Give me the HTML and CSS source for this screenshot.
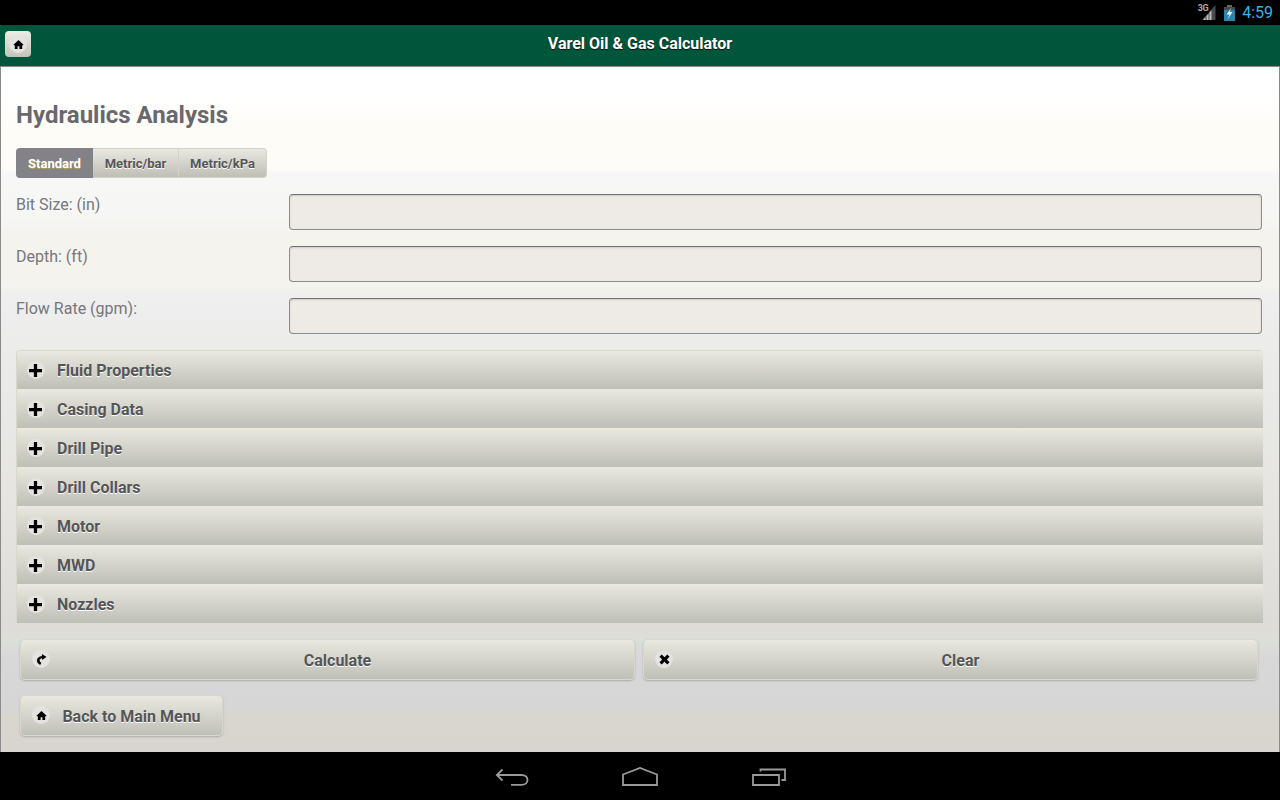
FILE: index.html
```html
<!DOCTYPE html>
<html lang="en">
<head>
<meta charset="utf-8">
<title>Varel Oil &amp; Gas Calculator</title>
<link rel="stylesheet" href="styles.css">
</head>
<body>
<div class="status">
  <span class="net">3G</span>
  <svg class="signal" width="14" height="15" viewBox="0 0 14 15"><path d="M0 15 13.500 0V15Z" fill="#4a4a4a"/><path d="M1 15 3.500 12V15ZM4.500 15V11L6.500 8.700V15ZM7.500 15V7.500L9.500 5.300V15Z" fill="#bdbdbd"/></svg>
  <svg class="battery" width="11" height="16" viewBox="0 0 11 16"><path d="M3 0H8V2H3Z" fill="#666"/><path d="M0 2H11V5H0Z" fill="#4a4a4a"/><path d="M0 5H11V16H0Z" fill="#2c84ae"/><path d="M7.500 2.500 2.500 9.500H5.500L3.500 14.500 8.500 7H5.500Z" fill="#e8f4f8"/></svg>
  <span class="clock">4:59</span>
</div>
<header class="appbar">
  <a class="homebtn"><span class="disc"><svg class="ic" viewBox="0 0 12 12"><path d="M6 1 .5 6.300 1.300 7 2 6.500V11H5V8H7V11H10V6.500L10.700 7 11.500 6.300Z"/></svg></span></a>
  <h1 class="apptitle">Varel Oil &amp; Gas Calculator</h1>
</header>
<main class="page">
  <h2 class="heading">Hydraulics Analysis</h2>
  <div class="segments">
    <span class="seg seg-on">Standard</span><span class="seg seg-a">Metric/bar</span><span class="seg seg-b">Metric/kPa</span>
  </div>
  <div class="field"><label class="lbl">Bit Size: (in)</label><div class="inp"></div></div>
  <div class="field"><label class="lbl">Depth: (ft)</label><div class="inp"></div></div>
  <div class="field"><label class="lbl">Flow Rate (gpm):</label><div class="inp"></div></div>
  <div class="accordion">
    <div class="row"><span class="disc"><svg class="ic ic-plus" viewBox="0 0 12 12"><path d="M4.500 0H7.500V4.500H12V7.500H7.500V12H4.500V7.500H0V4.500H4.500Z"/></svg></span><span class="rowtext">Fluid Properties</span></div>
    <div class="row"><span class="disc"><svg class="ic ic-plus" viewBox="0 0 12 12"><path d="M4.500 0H7.500V4.500H12V7.500H7.500V12H4.500V7.500H0V4.500H4.500Z"/></svg></span><span class="rowtext">Casing Data</span></div>
    <div class="row"><span class="disc"><svg class="ic ic-plus" viewBox="0 0 12 12"><path d="M4.500 0H7.500V4.500H12V7.500H7.500V12H4.500V7.500H0V4.500H4.500Z"/></svg></span><span class="rowtext">Drill Pipe</span></div>
    <div class="row"><span class="disc"><svg class="ic ic-plus" viewBox="0 0 12 12"><path d="M4.500 0H7.500V4.500H12V7.500H7.500V12H4.500V7.500H0V4.500H4.500Z"/></svg></span><span class="rowtext">Drill Collars</span></div>
    <div class="row"><span class="disc"><svg class="ic ic-plus" viewBox="0 0 12 12"><path d="M4.500 0H7.500V4.500H12V7.500H7.500V12H4.500V7.500H0V4.500H4.500Z"/></svg></span><span class="rowtext">Motor</span></div>
    <div class="row"><span class="disc"><svg class="ic ic-plus" viewBox="0 0 12 12"><path d="M4.500 0H7.500V4.500H12V7.500H7.500V12H4.500V7.500H0V4.500H4.500Z"/></svg></span><span class="rowtext">MWD</span></div>
    <div class="row"><span class="disc"><svg class="ic ic-plus" viewBox="0 0 12 12"><path d="M4.500 0H7.500V4.500H12V7.500H7.500V12H4.500V7.500H0V4.500H4.500Z"/></svg></span><span class="rowtext">Nozzles</span></div>
  </div>
  <div class="actions">
    <a class="btn"><span class="disc btn-disc"><svg class="ic" viewBox="0 0 12 12"><path d="M6.500 0 11.500 3.200 6.500 6.500V4.600C5 4.900 4 5.800 4 7.200 4 8.200 4.700 9 5.800 9.500L4.600 12C2.200 11 1 9.300 1 7.200 1 4.400 3.300 2.500 6.500 2.200Z"/></svg></span><span class="btntext">Calculate</span></a>
    <a class="btn"><span class="disc btn-disc"><svg class="ic" viewBox="0 0 12 12"><path d="M3 .5 6 3.500 9 .5 11.500 3 8.500 6 11.500 9 9 11.500 6 8.500 3 11.500 .5 9 3.500 6 .5 3Z"/></svg></span><span class="btntext">Clear</span></a>
  </div>
  <a class="btn btn-back"><span class="disc btn-disc"><svg class="ic" viewBox="0 0 12 12"><path d="M6 1 .5 6.300 1.300 7 2 6.500V11H5V8H7V11H10V6.500L10.700 7 11.500 6.300Z"/></svg></span><span class="btntext">Back to Main Menu</span></a>
</main>
<nav class="navbar">
  <svg width="36" height="20" viewBox="0 0 36 20" fill="none" stroke="#9a9a9a" stroke-width="1.800"><path d="M8.500 2.500 2.800 8 8.500 13.500M2.800 8H27.500C35.500 8 35.500 17.800 27.500 17.800H17"/></svg>
  <svg width="36" height="20" viewBox="0 0 36 20" fill="none" stroke="#9a9a9a" stroke-width="1.800"><path d="M1 7.500 18 1 35 7.500V18H1Z"/></svg>
  <svg width="36" height="20" viewBox="0 0 36 20" fill="none" stroke="#9a9a9a" stroke-width="1.800"><path d="M3 8H29V18H3ZM10.500 4.500V2.500H35V13H31.500"/></svg>
</nav>
</body>
</html>
```
FILE: styles.css
```css
* { box-sizing: border-box; }
html, body { margin: 0; height: 800px; overflow: hidden; }
body {
  width: 1280px;
  display: flex;
  flex-direction: column;
  font-family: Roboto, "Liberation Sans", sans-serif;
  background: #000;
}
.status {
  height: 25px;
  background: #000;
  display: flex;
  align-items: flex-start;
  justify-content: flex-end;
  padding: 4px 7px 0 0;
}
.net { font-size: 9px; color: #aaa; margin-top: 0; margin-right: -6px; line-height: 9px; font-weight: 700; letter-spacing: -0.5px; }
.signal { margin-right: 8px; margin-top: 1px; }
.battery { margin-right: 7px; margin-top: 1px; }
.clock { font-size: 16px; color: #33b5e5; line-height: 18px; }
.appbar {
  height: 42px;
  background: #00563a;
  border-bottom: 1px solid #8a8a8a;
  display: flex;
  align-items: center;
  justify-content: center;
  position: relative;
  padding-bottom: 4px;
}
.apptitle {
  margin: 0;
  font-size: 16px;
  font-weight: 700;
  color: #fff;
  text-shadow: 0 1px 1px #111;
}
.homebtn {
  position: absolute;
  left: 5px;
  top: 6px;
  width: 26px;
  height: 26px;
  border-radius: 4px;
  background: linear-gradient(#eeece6, #c4c4bb);
  display: flex;
  align-items: center;
  justify-content: center;
}
.disc {
  width: 18px;
  height: 18px;
  border-radius: 50%;
  background: #e4e3df;
  display: flex;
  align-items: center;
  justify-content: center;
  flex: none;
}
.ic { width: 11px; height: 11px; fill: #000; display: block; }
.ic-plus { width: 13px; height: 13px; margin-right: 1px; }
.page {
  height: 685px;
  border-left: 1px solid #8a8a8a;
  border-right: 1px solid #8a8a8a;
  padding: 33px 15px 0;
  background: linear-gradient(#fff 0, #fff 28px, #fefcf7 60px, #fefcf8 103px, #f7f7f7 106px, #f6f6f4 150px, #f5f3ee 165px, #f5f3ee 218px, #efefef 226px, #e9e9e7 330px, #e5e4e0 450px, #dedcd8 558px, #dcdfd8 575px, #d8d8d8 590px, #d6d6d6 640px, #d9d5cf 650px, #d8d5d0 685px);
}
.heading {
  margin: 0;
  font-size: 24px;
  line-height: 30px;
  font-weight: 700;
  color: #69686c;
}
.segments {
  display: flex;
  width: 251px;
  height: 30px;
  margin-top: 18px;
  margin-bottom: 16px;
}
.seg {
  font-size: 13px;
  font-weight: 700;
  text-align: center;
  color: #555558;
  text-shadow: 0 1px 0 #fff;
  background: linear-gradient(#e9e8e1, #bfbfb6);
  border: 1px solid #d2d2ca;
  border-left: 0;
  line-height: 29px;
}
.seg-on {
  width: 77px;
  background: #838287;
  color: #fff;
  border: 0;
  border-radius: 4px 0 0 4px;
  line-height: 31px;
  text-shadow: 0 1px 0 #b59f50;
}
.seg-a { width: 86px; }
.seg-b { width: 88px; border-radius: 0 4px 4px 0; }
.field {
  display: flex;
  height: 36px;
  margin-bottom: 16px;
}
.lbl {
  width: 273px;
  font-size: 16px;
  line-height: 22px;
  color: #77767a;
  flex: none;
}
.inp {
  width: 973px;
  height: 36px;
  background: #eeebe6;
  border: 1px solid #8d8d8b;
  border-top-color: #707070;
  border-radius: 4px;
  box-shadow: inset 0 1px 2px #ccc;
}
.accordion {
  width: 1247px;
  border: 1px solid #d9d9c9;
  border-width: 1px 0 0 1px;
  border-radius: 4px 4px 0 0;
  overflow: hidden;
}
.row {
  height: 39px;
  display: flex;
  align-items: center;
  padding: 2px 0 0 10px;
  background: linear-gradient(#eaeade, #e6e5dc 8%, #bfc0b8);
  border-bottom: 1px solid #bfc0b8;
}
.accordion .row:first-child { height: 38px; padding-top: 1px; }
.rowtext {
  margin-left: 12px;
  font-size: 16px;
  font-weight: 700;
  color: #555558;
  text-shadow: 0 1px 0 #fff;
}
.actions {
  display: flex;
  gap: 8px;
  margin: 16px 0 15px 4px;
}
.btn {
  position: relative;
  display: flex;
  align-items: center;
  justify-content: center;
  width: 615px;
  height: 41px;
  padding: 2px 0 0 20px;
  border: 1px solid #d8d8ce;
  border-radius: 5px;
  background: linear-gradient(#eaeade, #e6e5dc 8%, #bfc0b8);
  box-shadow: 0 1px 2px #aaa;
  font-size: 16px;
  font-weight: 700;
  color: #555558;
  text-shadow: 0 1px 0 #fff;
}
.btn-disc { position: absolute; left: 11px; top: 10px; }
.btn-back {
  width: 203px;
  margin-left: 4px;
}
.navbar {
  height: 48px;
  background: #000;
  display: flex;
  align-items: center;
  justify-content: center;
  gap: 92px;
  padding-top: 2px;
}
```
